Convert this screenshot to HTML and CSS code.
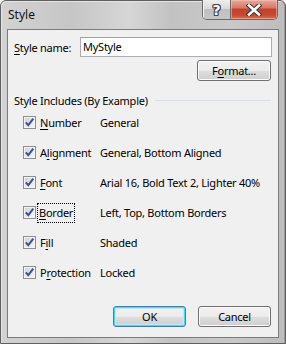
FILE: index.html
```html
<!DOCTYPE html>
<html>
<head>
<meta charset="utf-8">
<link rel="stylesheet" href="styles.css">
</head>
<body>
<div class="window">
  <div class="titlebar">
    <span class="title">Style</span>
    <div class="caption-btns">
      <div class="cbtn help"><span class="qmark">?</span></div>
      <div class="cbtn close">
        <svg width="16" height="12" viewBox="0 0 16 12">
          <path d="M3 1.5 L13 10.5 M13 1.5 L3 10.5" stroke="#3a3a3a" stroke-width="4.6" stroke-linecap="square" fill="none"/>
          <path d="M3 1.5 L13 10.5 M13 1.5 L3 10.5" stroke="#ffffff" stroke-width="2.6" stroke-linecap="square" fill="none"/>
        </svg>
      </div>
    </div>
  </div>
  <div class="client">
    <div class="name-row">
      <span class="name-label"><u>S</u>tyle name:</span>
      <div class="input">MyStyle</div>
    </div>
    <div class="format-row">
      <div class="btn">F<u>o</u>rmat...</div>
    </div>
    <div class="group-header">
      <span>Style Includes (By Example)</span>
      <span class="rule"></span>
    </div>
    <div class="rows">
      <div class="row"><span class="cb"><svg width="11" height="11" viewBox="0 0 11 11"><path d="M1.8 5.3 L4.3 8.2 L9.3 1.6" stroke="#3d5390" stroke-width="2" fill="none"/></svg></span><span class="lbl"><u>N</u>umber</span><span class="val">General</span></div>
      <div class="row"><span class="cb"><svg width="11" height="11" viewBox="0 0 11 11"><path d="M1.8 5.3 L4.3 8.2 L9.3 1.6" stroke="#3d5390" stroke-width="2" fill="none"/></svg></span><span class="lbl">A<u>l</u>ignment</span><span class="val">General, Bottom Aligned</span></div>
      <div class="row"><span class="cb"><svg width="11" height="11" viewBox="0 0 11 11"><path d="M1.8 5.3 L4.3 8.2 L9.3 1.6" stroke="#3d5390" stroke-width="2" fill="none"/></svg></span><span class="lbl"><u>F</u>ont</span><span class="val">Arial 16, Bold Text 2, Lighter 40%</span></div>
      <div class="row"><span class="cb"><svg width="11" height="11" viewBox="0 0 11 11"><path d="M1.8 5.3 L4.3 8.2 L9.3 1.6" stroke="#3d5390" stroke-width="2" fill="none"/></svg></span><span class="lbl"><span class="focus"><u>B</u>order</span></span><span class="val">Left, Top, Bottom Borders</span></div>
      <div class="row"><span class="cb"><svg width="11" height="11" viewBox="0 0 11 11"><path d="M1.8 5.3 L4.3 8.2 L9.3 1.6" stroke="#3d5390" stroke-width="2" fill="none"/></svg></span><span class="lbl">F<u>i</u>ll</span><span class="val">Shaded</span></div>
      <div class="row"><span class="cb"><svg width="11" height="11" viewBox="0 0 11 11"><path d="M1.8 5.3 L4.3 8.2 L9.3 1.6" stroke="#3d5390" stroke-width="2" fill="none"/></svg></span><span class="lbl">P<u>r</u>otection</span><span class="val">Locked</span></div>
    </div>
    <div class="actions">
      <div class="btn default">OK</div>
      <div class="btn">Cancel</div>
    </div>
  </div>
</div>
</body>
</html>
```

FILE: styles.css
```css
* { box-sizing: border-box; }
html, body { margin: 0; padding: 0; }
body {
  width: 286px;
  height: 344px;
  overflow: hidden;
  background: #ffffff;
  font-family: "Noto Sans", "Open Sans", sans-serif;
  font-size: 11px;
  letter-spacing: -0.25px;
  color: #000;
  white-space: nowrap;
}
u { text-decoration: underline; text-underline-offset: 2px; }

.window {
  width: 286px;
  height: 344px;
  border: 1px solid #5f5f5f;
  border-radius: 6px 6px 0 0;
  background: linear-gradient(90deg, #d2d2d2 0%, #c6c6c6 25%, #d6d6d6 45%, #c2c2c2 60%, #c9c9c9 80%, #bdbdbd 100%);
  box-shadow: inset 1px 1px 0 #e4e4e4, inset -1px 0 0 #9a9a9a;
  padding: 0 6px 5px 6px;
  display: flex;
  flex-direction: column;
}

.titlebar {
  height: 28px;
  display: flex;
  align-items: flex-start;
  flex: none;
}
.title {
  margin-top: 6px;
  margin-left: 1px;
  font-size: 12px;
  letter-spacing: 0;
  line-height: 16px;
  color: #111;
}
.caption-btns {
  margin-left: auto;
  margin-right: 1px;
  margin-top: -1px;
  display: flex;
  height: 20px;
  border: 1px solid #6a6a6a;
  border-top: none;
  border-radius: 0 0 5px 5px;
  overflow: hidden;
}
.cbtn {
  height: 19px;
  display: flex;
  align-items: center;
  justify-content: center;
}
.help {
  width: 28px;
  background: linear-gradient(#eeeeee 0%, #dadada 45%, #c0c0c0 50%, #c6c6c6 100%);
  border-right: 1px solid #6a6a6a;
  box-shadow: inset 1px 0 0 #f4f4f4;
}
.qmark {
  font-family: "DejaVu Sans", sans-serif;
  font-weight: bold;
  font-size: 14px;
  line-height: 14px;
  letter-spacing: 0;
  color: #fff;
  text-shadow: 1px 0 0 #444, -1px 0 0 #444, 0 1px 0 #444, 0 -1px 0 #444, 1px 1px 0 #444, -1px -1px 0 #444, 1px -1px 0 #444, -1px 1px 0 #444;
}
.close {
  width: 46px;
  background: linear-gradient(#e9a99c 0%, #d77a68 40%, #c2412a 50%, #c84a32 80%, #d8705a 100%);
  box-shadow: inset 0 0 0 1px rgba(255, 200, 190, 0.5);
}

.client {
  flex: 1;
  border: 1px solid #7b7b7b;
  background: #f0f0f0;
  display: flex;
  flex-direction: column;
  padding: 0 6px 10px 6px;
}

.name-row {
  display: flex;
  align-items: center;
  margin-top: 7px;
}
.name-label {
  width: 66px;
  flex: none;
}
.input {
  flex: 1;
  height: 20px;
  border: 1px solid #abadb3;
  border-top-color: #a0a3aa;
  background: #fff;
  padding-left: 2px;
  line-height: 18px;
}

.format-row {
  display: flex;
  justify-content: flex-end;
  margin-top: 3px;
  padding-right: 1px;
}

.btn {
  width: 74px;
  height: 21px;
  border: 1px solid #707070;
  border-radius: 3px;
  background: linear-gradient(#f2f2f2 0%, #ebebeb 50%, #dddddd 51%, #cfcfcf 100%);
  box-shadow: inset 0 0 0 1px #fbfbfb;
  display: flex;
  align-items: center;
  justify-content: center;
  line-height: 14px;
}

.group-header {
  display: flex;
  align-items: center;
  margin-top: 12px;
  height: 14px;
  padding-right: 1px;
}
.rule {
  flex: 1;
  height: 1px;
  background: #d5dfe5;
  margin-left: 7px;
}

.rows {
  padding-left: 9px;
}
.row {
  height: 30px;
  display: flex;
  align-items: center;
}
.cb {
  width: 13px;
  height: 13px;
  border: 1px solid #8e8f8f;
  background: linear-gradient(135deg, #cbcfd5 0%, #e4e6e9 50%, #f7f7f7 100%);
  box-shadow: inset 0 0 0 1px #f4f4f4;
  display: flex;
  align-items: center;
  justify-content: center;
  flex: none;
}
.cb svg { display: block; }
.lbl {
  width: 60px;
  margin-left: 4px;
  flex: none;
}
.focus {
  outline: 1px dotted #000;
  outline-offset: 0;
  padding: 1px 1px 2px 1px;
  margin-left: -2px;
}

.actions {
  margin-top: auto;
  display: flex;
  justify-content: flex-end;
  gap: 12px;
  padding-right: 1px;
}
.actions .btn { width: 73px; }
.btn.default {
  border-color: #3c7fb1;
  box-shadow: inset 0 0 0 1px #48d8fb, inset 0 0 0 2px #c0eafa;
}
```
